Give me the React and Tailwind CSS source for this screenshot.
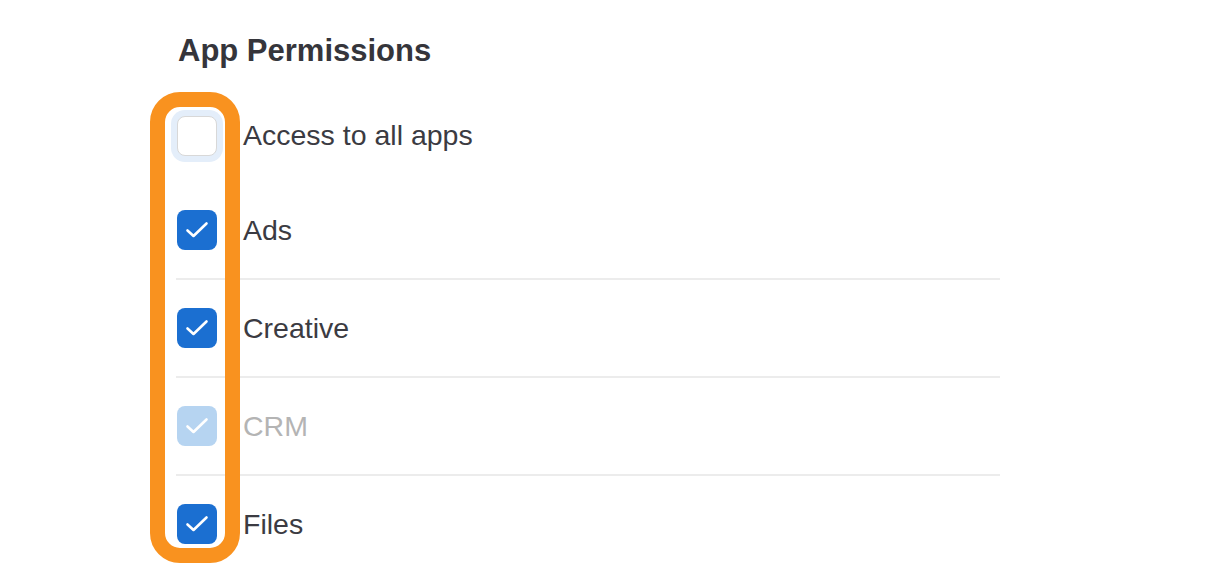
import React from "react";

const apps = [
  { name: "Ads", checked: true },
  { name: "Creative", checked: true },
  { name: "CRM", checked: true, disabled: true },
  { name: "Files", checked: true },
];

const Check = () => (
  <svg width="26" height="26" viewBox="0 0 26 26" fill="none" className="block">
    <path d="M3.5 13.5l6 5.5L22.5 6.5" stroke="white" strokeWidth="2.6" strokeLinecap="round" strokeLinejoin="round" />
  </svg>
);

const Box = ({ checked, disabled }) => {
  if (!checked) {
    return (
      <div className="w-[40px] h-[40px] rounded-[8px] bg-white border border-[#d8d8d8] shadow-[0_0_0_6px_#e4eefa]" />
    );
  }
  return (
    <div
      className={
        disabled
          ? "w-[40px] h-[40px] rounded-[8px] bg-[#b6d4f1] flex items-center justify-center"
          : "w-[40px] h-[40px] rounded-[8px] bg-[#1b6fd1] flex items-center justify-center"
      }
    >
      <Check />
    </div>
  );
};

const App = () => {
  return (
    <div className="w-[1208px] h-[568px] bg-white overflow-hidden font-['Liberation_Sans',Arial,sans-serif]">
      <div className="pl-[176px] pt-[33px]">
        <h2 className="pl-[2px] text-[31px] leading-[36px] font-bold text-[#35353b] mb-[17px]">
          App Permissions
        </h2>

        <div className="relative w-[824px]">
          {/* highlight around the checkbox column */}
          <div className="absolute left-[-26px] top-[6px] w-[90px] h-[471px] rounded-[30px] border-[15px] border-[#f9921f] pointer-events-none" />

          <div className="h-[96px] flex items-center gap-[26px] pl-[1px] pt-[3px]">
            <Box checked={false} />
            <span className="text-[28.5px] text-[#3b3b42]">Access to all apps</span>
          </div>

          {apps.map((app, i) => (
            <div
              key={app.name}
              className={
                i === 0
                  ? "h-[96px] flex items-center gap-[26px] pl-[1px]"
                  : "h-[98px] border-t-2 border-[#ececec] flex items-center gap-[26px] pl-[1px]"
              }
            >
              <Box checked={app.checked} disabled={app.disabled} />
              <span className={app.disabled ? "text-[28.5px] text-[#b4b4b4]" : "text-[28.5px] text-[#3b3b42]"}>
                {app.name}
              </span>
            </div>
          ))}
        </div>
      </div>
    </div>
  );
};

export default App;
